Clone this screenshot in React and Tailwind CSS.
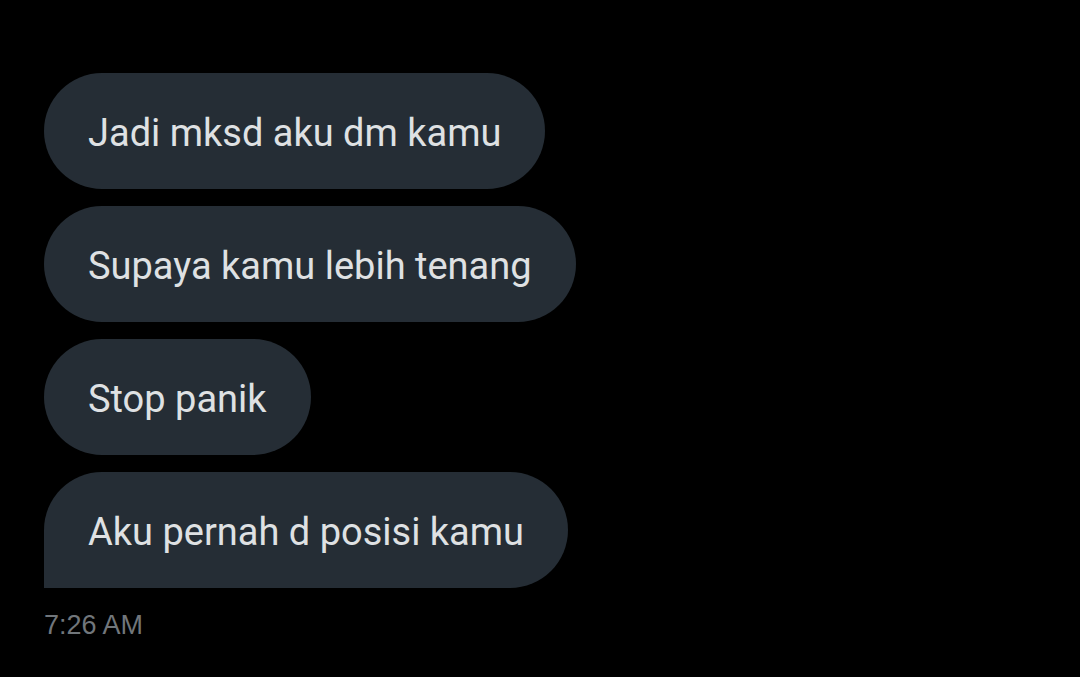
const messages = [
    "Jadi mksd aku dm kamu",
    "Supaya kamu lebih tenang",
    "Stop panik",
    "Aku pernah d posisi kamu",
];

const App = () => {
    return (
        <div className="min-h-screen w-full bg-black pt-[73px] pl-[44px]">
            <div className="flex flex-col items-start gap-[17px]">
                {messages.map((msg, i) => (
                    <div
                        key={i}
                        className={`h-[116px] flex items-center px-[44px] bg-[#252d35] text-[#dfe1e3] text-[38px] font-['Roboto',sans-serif] rounded-full ${i === messages.length - 1 ? 'rounded-bl-none' : ''}`}
                    >
                        <span className="pt-[5px]">{msg}</span>
                    </div>
                ))}
            </div>
            <div className="mt-[24px] text-[27px] leading-none text-[#71767b] font-['Liberation_Sans',Arial,sans-serif]">
                7:26 AM
            </div>
        </div>
    );
};

export default App;
